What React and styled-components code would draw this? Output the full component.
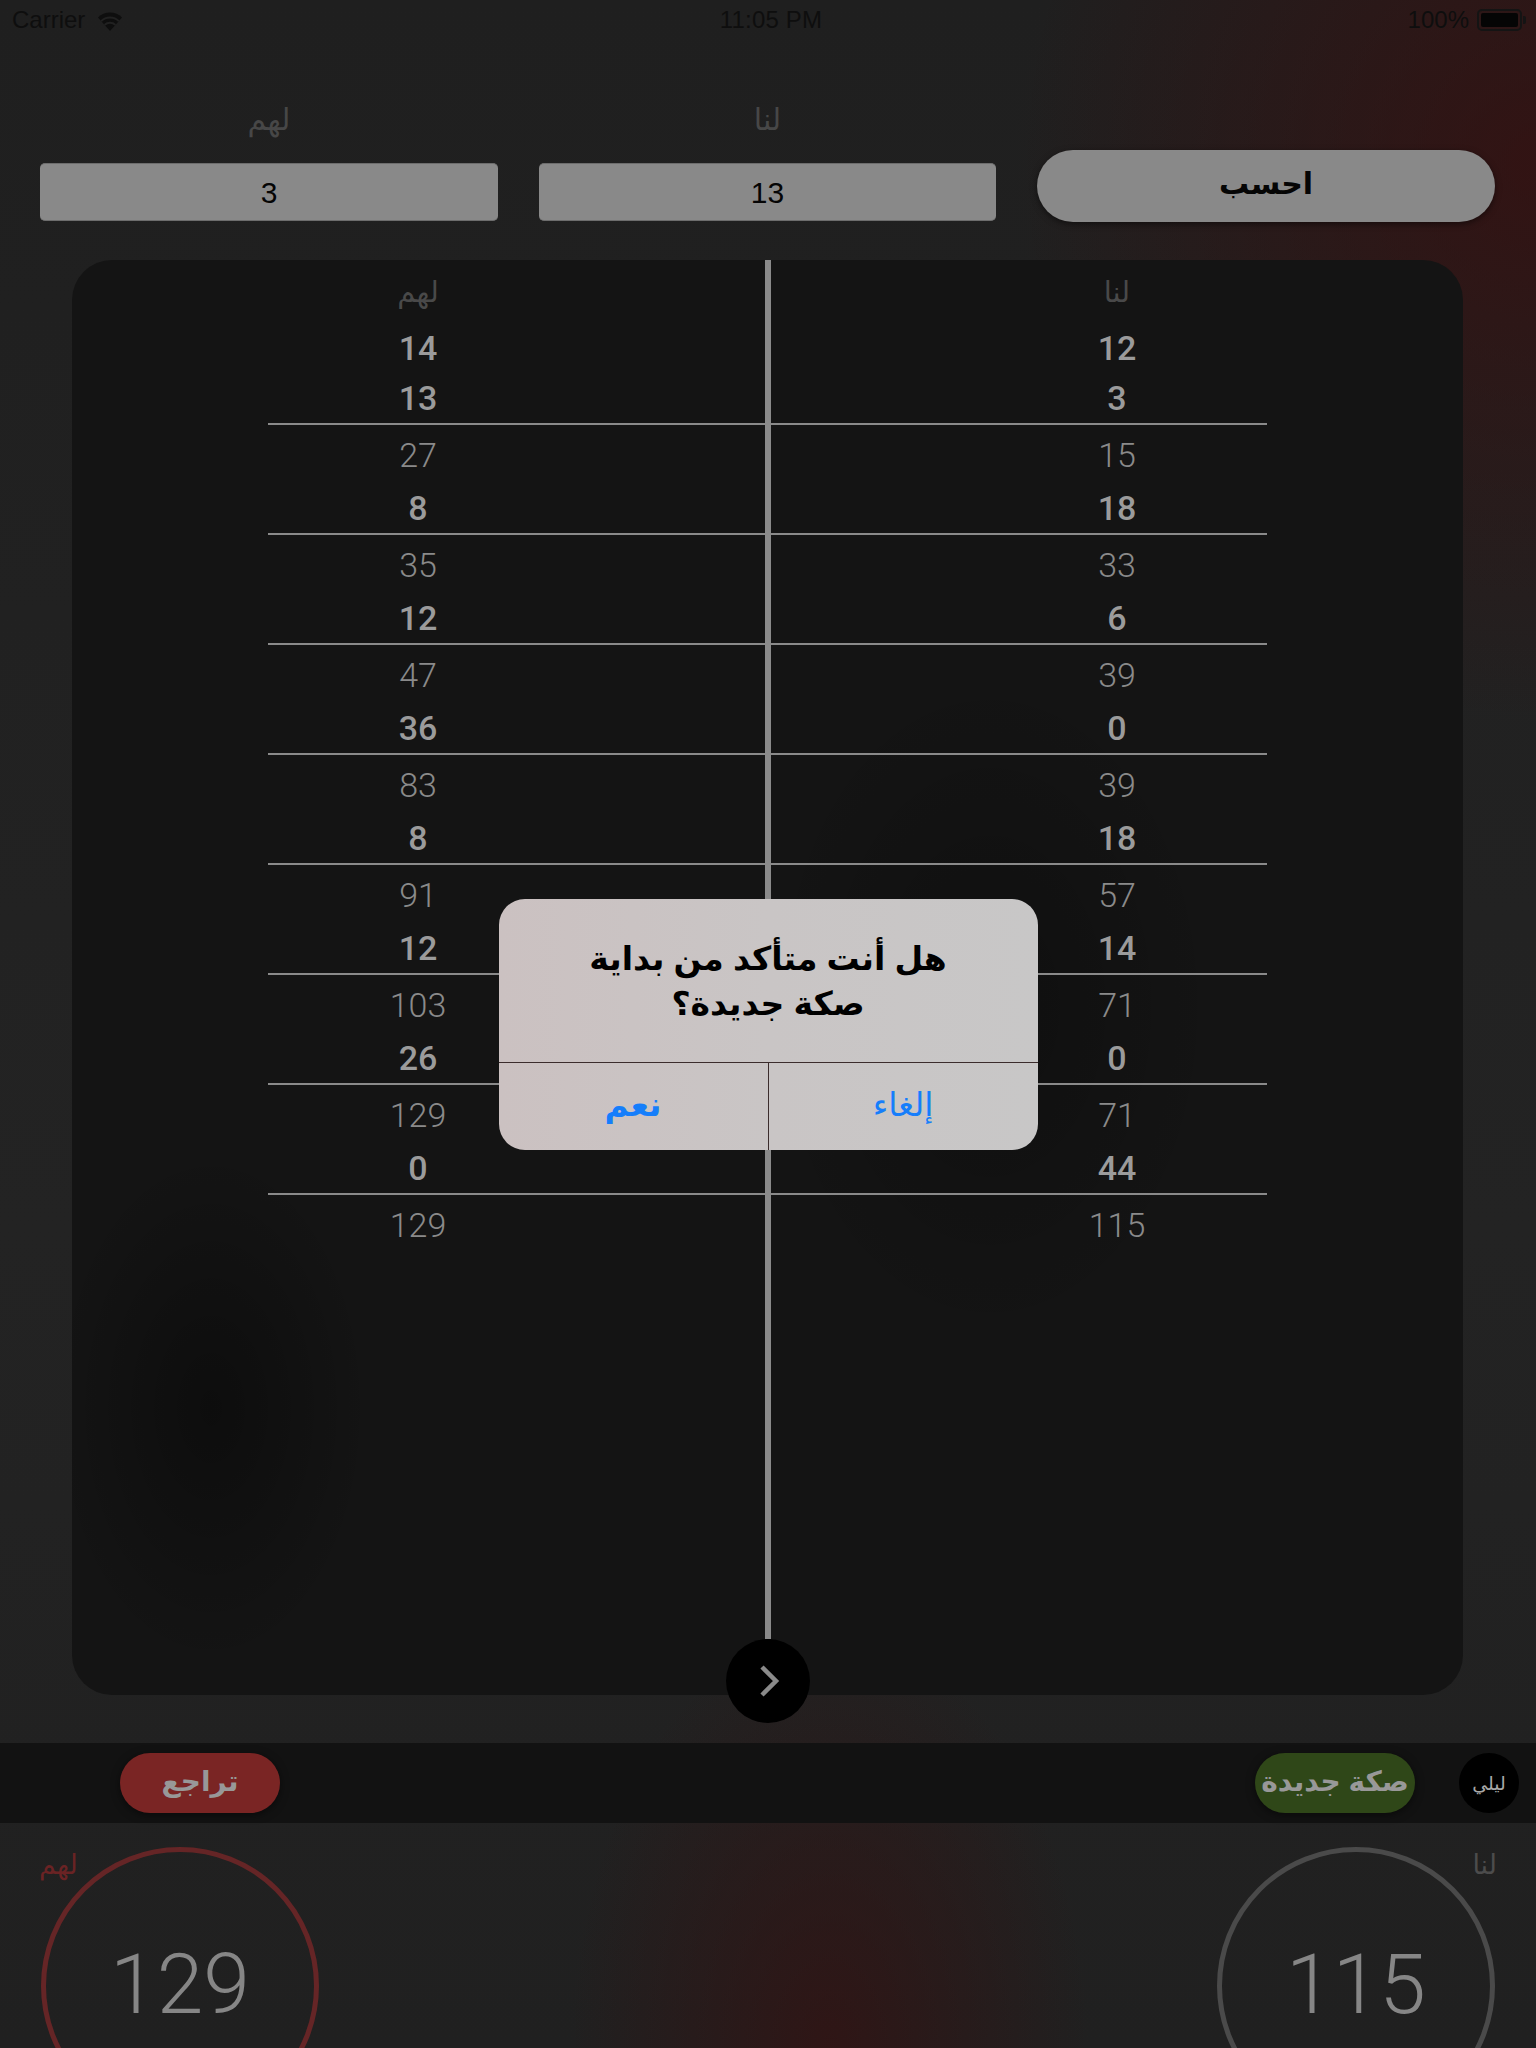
import React from "react";
import styled, { createGlobalStyle } from "styled-components";

const GlobalStyle = createGlobalStyle`
    html, body {
        margin: 0;
        padding: 0;
        background: #212121;
    }
    * {
        box-sizing: border-box;
    }
`;

const sans = `"Liberation Sans", "DejaVu Sans", sans-serif`;
const numeric = `Roboto, "Liberation Sans", sans-serif`;

const score = {
    them: {
        first: [14, 13],
        blocks: [[27, 8], [35, 12], [47, 36], [83, 8], [91, 12], [103, 26], [129, 0]],
        total: 129,
    },
    us: {
        first: [12, 3],
        blocks: [[15, 18], [33, 6], [39, 0], [39, 18], [57, 14], [71, 0], [71, 44]],
        total: 115,
    },
};

const Screen = styled.div`
    position: relative;
    width: 1536px;
    height: 2048px;
    overflow: hidden;
    font-family: ${sans};
    background:
        radial-gradient(ellipse 260px 420px at 54% 100%, rgba(52, 18, 18, 0.75), transparent),
        radial-gradient(ellipse 520px 560px at 100% 8%, rgba(58, 14, 14, 0.7), transparent),
        linear-gradient(180deg, #1f1f1f 0%, #232323 60%, #202020 100%);
    display: flex;
    flex-direction: column;
    & > * {
        flex-shrink: 0;
    }
`;

const StatusBar = styled.div`
    height: 40px;
    padding: 0 10px 0 12px;
    display: grid;
    grid-template-columns: 1fr auto 1fr;
    align-items: center;
    font-size: 24px;
    color: #0e0e0e;
`;

const StatusSide = styled.div`
    display: flex;
    align-items: center;
    gap: ${(p) => (p.$end ? "8px" : "12px")};
    justify-content: ${(p) => (p.$end ? "flex-end" : "flex-start")};
`;

const Clock = styled.div`
    padding-left: 4px;
    letter-spacing: 0.2px;
`;

const Battery = styled.div`
    display: flex;
    align-items: center;
    gap: 1px;
`;

const BatteryShell = styled.div`
    width: 45px;
    height: 22px;
    border: 2px solid #141414;
    border-radius: 5px;
    padding: 2px;
    display: flex;
`;

const BatteryFill = styled.div`
    flex: 1;
    background: #050505;
    border-radius: 2px;
`;

const BatteryNub = styled.div`
    width: 3px;
    height: 8px;
    background: #141414;
    border-radius: 0 2px 2px 0;
`;

const Controls = styled.div`
    display: grid;
    grid-template-columns: 458px 457px 458px;
    column-gap: 41px;
    align-items: end;
    padding: 62px 0 0 40px;
`;

const Field = styled.div`
    display: flex;
    flex-direction: column;
    align-items: center;
    gap: 25px;
`;

const FieldLabel = styled.div`
    height: 36px;
    line-height: 36px;
    font-size: 30px;
    color: #474747;
`;

const ValueBox = styled.div`
    width: 100%;
    height: 58px;
    background: #898989;
    border-radius: 5px;
    border-top: 1px solid #6d6d6d;
    border-bottom: 1px solid #6d6d6d;
    display: flex;
    align-items: center;
    justify-content: center;
    font-size: 30px;
    color: #050505;
    padding-top: 2px;
`;

const CalcButton = styled.div`
    height: 72px;
    margin-bottom: -1px;
    border-radius: 36px;
    background: #898989;
    box-shadow: 0 2px 6px rgba(0, 0, 0, 0.5);
    display: flex;
    align-items: center;
    justify-content: center;
    font-size: 30px;
    font-weight: 700;
    color: #050505;
    padding-bottom: 6px;
`;

const Panel = styled.div`
    position: relative;
    margin: 39px 0 0 72px;
    width: 1391px;
    height: 1435px;
    border-radius: 40px;
    background:
        radial-gradient(ellipse 160px 260px at 10% 80%, rgba(0, 0, 0, 0.35), transparent),
        radial-gradient(ellipse 230px 340px at 66% 52%, rgba(0, 0, 0, 0.25), transparent),
        #141414;
    display: flex;
    flex-direction: column;
    padding-bottom: 56px;
`;

const Sheet = styled.div`
    flex: 1;
    display: flex;
`;

const Divider = styled.div`
    width: 6px;
    background: #8a8a8a;
`;

const Column = styled.div`
    flex: 1;
    display: flex;
    flex-direction: column;
    align-items: ${(p) => (p.$side === "left" ? "flex-start" : "flex-end")};
    padding-left: ${(p) => (p.$side === "left" ? "196px" : "0")};
    padding-right: ${(p) => (p.$side === "left" ? "0" : "196px")};
`;

const Cell = styled.div`
    width: 300px;
    height: ${(p) => (p.$kind === "head" ? "63px" : p.$kind === "sum" ? "58px" : "50px")};
    display: flex;
    align-items: center;
    justify-content: center;
    font-family: ${(p) => (p.$kind === "head" ? sans : numeric)};
    font-size: ${(p) => (p.$kind === "head" ? "29px" : "34px")};
    font-weight: ${(p) => (p.$kind === "sum" ? 300 : p.$kind === "entry" ? 500 : 400)};
    color: ${(p) => (p.$kind === "head" ? "#494949" : p.$kind === "sum" ? "#8a8a8a" : "#9b9b9b")};
    padding-top: ${(p) => (p.$kind === "sum" ? "2px" : "0")};
`;

const Rule = styled.div`
    align-self: stretch;
    height: 2px;
    background: #8a8a8a;
`;

const NextButton = styled.div`
    position: absolute;
    left: 50%;
    bottom: -28px;
    transform: translateX(-50%);
    width: 84px;
    height: 84px;
    border-radius: 50%;
    background: #000;
    display: flex;
    align-items: center;
    justify-content: center;
`;

const Toolbar = styled.div`
    margin-top: 48px;
    height: 80px;
    background: #121212;
    display: flex;
    align-items: center;
    padding: 0 17px 0 120px;
`;

const Pill = styled.div`
    width: 160px;
    height: 60px;
    border-radius: 30px;
    background: ${(p) => p.$tone};
    box-shadow: 0 2px 8px rgba(0, 0, 0, 0.5);
    display: flex;
    align-items: center;
    justify-content: center;
    font-size: 28px;
    font-weight: 700;
    color: #989898;
    padding-bottom: 4px;
`;

const Spacer = styled.div`
    flex: 1;
`;

const NightToggle = styled.div`
    margin-left: 44px;
    width: 60px;
    height: 60px;
    border-radius: 50%;
    background: #000;
    display: flex;
    align-items: center;
    justify-content: center;
    font-size: 19px;
    color: #a8a8a8;
`;

const Scores = styled.div`
    position: relative;
    flex: 1 1 auto;
    min-height: 0;
    display: flex;
    justify-content: space-between;
    align-items: flex-start;
    padding: 24px 41px 0 41px;
`;

const ScoreRing = styled.div`
    flex-shrink: 0;
    width: 278px;
    height: 278px;
    border-radius: 50%;
    border: 5px solid ${(p) => p.$ring};
    display: flex;
    align-items: center;
    justify-content: center;
    font-family: ${numeric};
    font-weight: 300;
    font-size: 84px;
    color: #868686;
    padding-bottom: 4px;
`;

const CornerTag = styled.div`
    position: absolute;
    top: 26px;
    ${(p) => (p.$side === "left" ? "left: 39px;" : "right: 39px;")}
    font-size: 27px;
    color: ${(p) => p.$color};
`;

const Backdrop = styled.div`
    position: absolute;
    inset: 0;
    display: flex;
    align-items: center;
    justify-content: center;
`;

const Alert = styled.div`
    width: 539px;
    border-radius: 26px;
    overflow: hidden;
    background: linear-gradient(90deg, #cbc1c1 0%, #c9c5c5 50%, #c8c7c7 100%);
    direction: rtl;
`;

const AlertTitle = styled.div`
    padding: 37px 40px 36px;
    text-align: center;
    font-size: 33px;
    line-height: 45px;
    font-weight: 700;
    color: #000;
`;

const AlertActions = styled.div`
    display: flex;
    height: 88px;
    border-top: 1px solid #3b2c2c;
`;

const AlertAction = styled.div`
    flex: 1;
    display: flex;
    align-items: center;
    justify-content: center;
    font-size: 33px;
    font-weight: ${(p) => (p.$strong ? 700 : 400)};
    color: #157efb;
    border-right: ${(p) => (p.$divided ? "1px solid #3b2c2c" : "none")};
    padding-bottom: 4px;
`;

const WifiIcon = () => (
    <svg width="26" height="21" viewBox="0 0 26 21">
        <path d="M13 21 L1 7.5 A17 17 0 0 1 25 7.5 Z" fill="#0e0e0e" />
        <path d="M4.2 11.1 A12.6 12.6 0 0 1 21.8 11.1" stroke="#212121" strokeWidth="2" fill="none" />
        <path d="M7.6 14.9 A7.8 7.8 0 0 1 18.4 14.9" stroke="#212121" strokeWidth="2" fill="none" />
    </svg>
);

const Chevron = () => (
    <svg width="28" height="34" viewBox="0 0 28 34">
        <polyline points="8,3 22,17 8,31" fill="none" stroke="#8a8a8a" strokeWidth="4.5" />
    </svg>
);

const ScoreColumn = ({ side, title, data }) => (
    <Column $side={side}>
        <Cell $kind="head">{title}</Cell>
        {data.first.map((n, i) => (
            <Cell key={i} $kind="entry">{n}</Cell>
        ))}
        <Rule />
        {data.blocks.map(([sum, entry], i) => (
            <React.Fragment key={i}>
                <Cell $kind="sum">{sum}</Cell>
                <Cell $kind="entry">{entry}</Cell>
                <Rule />
            </React.Fragment>
        ))}
        <Cell $kind="sum">{data.total}</Cell>
    </Column>
);

export default function App() {
    return (
        <>
            <GlobalStyle />
            <Screen>
                <StatusBar>
                    <StatusSide>
                        <span>Carrier</span>
                        <WifiIcon />
                    </StatusSide>
                    <Clock>11:05 PM</Clock>
                    <StatusSide $end>
                        <span>100%</span>
                        <Battery>
                            <BatteryShell>
                                <BatteryFill />
                            </BatteryShell>
                            <BatteryNub />
                        </Battery>
                    </StatusSide>
                </StatusBar>

                <Controls>
                    <Field>
                        <FieldLabel>لهم</FieldLabel>
                        <ValueBox>3</ValueBox>
                    </Field>
                    <Field>
                        <FieldLabel>لنا</FieldLabel>
                        <ValueBox>13</ValueBox>
                    </Field>
                    <CalcButton>احسب</CalcButton>
                </Controls>

                <Panel>
                    <Sheet>
                        <ScoreColumn side="left" title="لهم" data={score.them} />
                        <Divider />
                        <ScoreColumn side="right" title="لنا" data={score.us} />
                    </Sheet>
                    <NextButton>
                        <Chevron />
                    </NextButton>
                </Panel>

                <Toolbar>
                    <Pill $tone="#7a2524">تراجع</Pill>
                    <Spacer />
                    <Pill $tone="#2f4718">صكة جديدة</Pill>
                    <NightToggle>ليلي</NightToggle>
                </Toolbar>

                <Scores>
                    <CornerTag $side="left" $color="#6a2324">لهم</CornerTag>
                    <ScoreRing $ring="#652526">129</ScoreRing>
                    <ScoreRing $ring="#4a4a4a">115</ScoreRing>
                    <CornerTag $side="right" $color="#4c4c4c">لنا</CornerTag>
                </Scores>

                <Backdrop>
                    <Alert>
                        <AlertTitle>
                            هل أنت متأكد من بداية
                            <br />
                            صكة جديدة؟
                        </AlertTitle>
                        <AlertActions>
                            <AlertAction>إلغاء</AlertAction>
                            <AlertAction $strong $divided>نعم</AlertAction>
                        </AlertActions>
                    </Alert>
                </Backdrop>
            </Screen>
        </>
    );
}
